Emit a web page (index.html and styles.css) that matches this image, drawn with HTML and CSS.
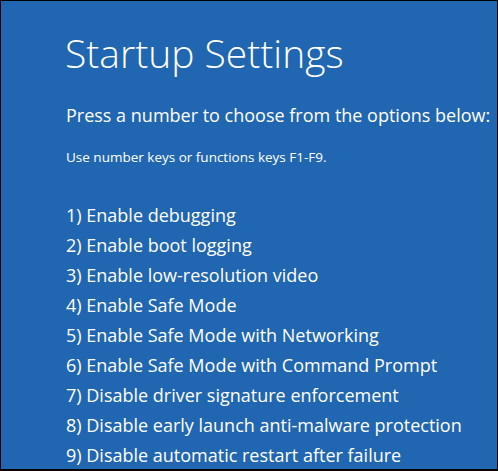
FILE: index.html
```html
<!DOCTYPE html>
<html lang="en">
<head>
    <meta charset="UTF-8">
    <meta name="viewport" content="width=device-width, initial-scale=1.0">
    <title>Startup Settings</title>
    <link rel="stylesheet" href="styles.css">
</head>
<body>
    <div id="screen">
        <h1 class="title">Startup Settings</h1>
        <p class="lead">Press a number to choose from the options below:</p>
        <p class="hint">Use number keys or functions keys F1-F9.</p>
        <ul class="options">
            <li>1) Enable debugging</li>
            <li>2) Enable boot logging</li>
            <li>3) Enable low-resolution video</li>
            <li>4) Enable Safe Mode</li>
            <li>5) Enable Safe Mode with Networking</li>
            <li>6) Enable Safe Mode with Command Prompt</li>
            <li>7) Disable driver signature enforcement</li>
            <li>8) Disable early launch anti-malware protection</li>
            <li>9) Disable automatic restart after failure</li>
        </ul>
    </div>
</body>
</html>
```

FILE: styles.css
```css
html, body{
    margin: 0; padding: 0;
    background: #fff;
}
#screen{
    width: 498px; height: 471px;
    box-sizing: border-box;
    background: #2166b1;
    border: 1px solid #000;
    border-bottom-width: 2px;
    padding: 0 0 0 65px;
    overflow: hidden;
    color: #fff;
    font-family: "Open Sans", "Noto Sans", sans-serif;
}
.title{
    margin: 0 0 0 -1px; padding-top: 27px;
    font-size: 39px; font-weight: 300; line-height: 50px;
}
.lead{
    margin: 0; padding-top: 25px;
    font-size: 18px; line-height: 24px;
}
.hint{
    margin: 0; padding-top: 21px;
    font-size: 13.5px; line-height: 18px;
}
.options{
    list-style: none;
    margin: 0; padding: 34px 0 0 0;
    font-size: 18px; line-height: 30px;
}
```
